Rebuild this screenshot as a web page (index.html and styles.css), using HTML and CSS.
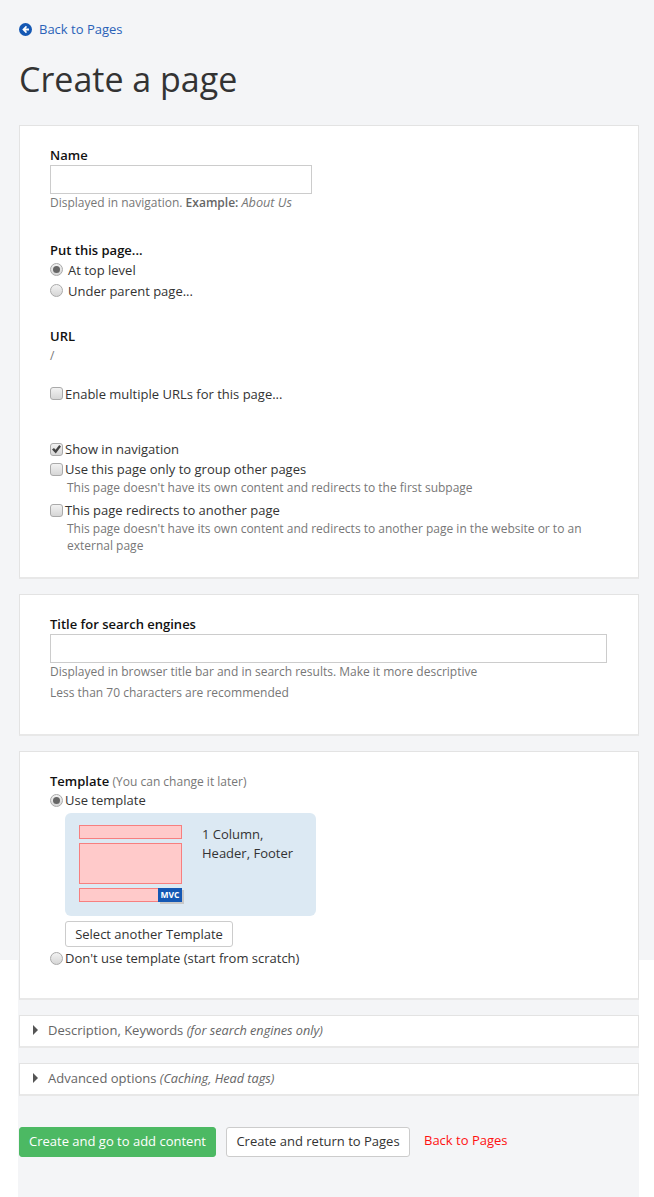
FILE: index.html
```html
<!DOCTYPE html>
<html lang="en">
<head>
    <meta charset="UTF-8"/>
    <title>Create a page</title>
    <link rel="stylesheet" href="styles.css">
</head>
<body>
<div class="page">
    <a class="back-link" href="#">
        <svg class="back-link_icon" viewBox="0 0 12 12" width="13" height="13">
            <circle cx="6" cy="6" r="6" fill="#1458b4"/>
            <path d="M6.4 2.6 3 6l3.4 3.4 1-1L6 7h3.2V5H6l1.4-1.4z" fill="#fff"/>
        </svg>
        Back to Pages
    </a>
    <h1 class="title">Create a page</h1>

    <!--main settings-->
    <div class="card card__main">
        <div class="field field__name">
            <label class="field_label" for="name">Name</label>
            <input class="text-input text-input__name" id="name" type="text">
            <p class="hint hint__name">Displayed in navigation. <b>Example:</b> <i>About Us</i></p>
        </div>

        <div class="field field__parent">
            <div class="field_label">Put this page...</div>
            <label class="option option__radio"><input type="radio" name="parent" checked>At top level</label>
            <label class="option option__radio"><input type="radio" name="parent">Under parent page...</label>
        </div>

        <div class="field field__url">
            <div class="field_label">URL</div>
            <p class="hint">/</p>
        </div>

        <label class="option option__multi"><input type="checkbox">Enable multiple URLs for this page...</label>

        <div class="field field__flags">
            <label class="option"><input type="checkbox" checked>Show in navigation</label>
            <label class="option"><input type="checkbox">Use this page only to group other pages</label>
            <p class="hint hint__option">This page doesn't have its own content and redirects to the first subpage</p>
            <label class="option option__spaced"><input type="checkbox">This page redirects to another page</label>
            <p class="hint hint__option">This page doesn't have its own content and redirects to another page in the website or to an external page</p>
        </div>
    </div>

    <!--search engines-->
    <div class="card card__seo">
        <label class="field_label" for="seoTitle">Title for search engines</label>
        <input class="text-input text-input__seo" id="seoTitle" type="text">
        <p class="hint">Displayed in browser title bar and in search results. Make it more descriptive</p>
        <p class="hint hint__second">Less than 70 characters are recommended</p>
    </div>

    <!--template-->
    <div class="card card__template">
        <div class="field_label field_label__template">Template <span class="field_note">(You can change it later)</span></div>
        <label class="option"><input type="radio" name="template" checked>Use template</label>
        <div class="template">
            <div class="template_preview">
                <div class="template_block template_block__head"></div>
                <div class="template_block template_block__body"></div>
                <div class="template_block template_block__foot"></div>
                <span class="template_badge">MVC</span>
            </div>
            <div class="template_name">1 Column,<br>Header, Footer</div>
        </div>
        <button class="btn btn__template" type="button">Select another Template</button>
        <label class="option"><input type="radio" name="template">Don't use template (start from scratch)</label>
    </div>

    <div class="fold"><span class="fold_arrow"></span>Description, Keywords&nbsp;<i>(for search engines only)</i></div>
    <div class="fold"><span class="fold_arrow"></span>Advanced options&nbsp;<i>(Caching, Head tags)</i></div>

    <div class="actions">
        <button class="btn btn__primary" type="button">Create and go to add content</button>
        <button class="btn btn__return" type="button">Create and return to Pages</button>
        <a class="cancel" href="#">Back to Pages</a>
    </div>
</div>
</body>
</html>
```

FILE: styles.css
```css
html, body {
    margin: 0;
}

body {
    font-family: "Open Sans", sans-serif;
    font-size: 13px;
    line-height: 20px;
    color: #333;
    background: #fff linear-gradient(#f4f5f7, #f4f5f7) no-repeat 0 0 / 100% 960px;
}

p {
    margin: 0;
}

.page {
    box-sizing: border-box;
    width: 621px;
    height: 1197px;
    margin-left: 18px;
    padding-top: 19px;
    background: #f4f5f7;
    overflow: hidden;
}

.back-link {
    display: flex;
    align-items: center;
    gap: 7px;
    margin-left: 1px;
    color: #2a62b8;
    text-decoration: none;
}

.title {
    margin: 14px 0 20px 1px;
    font-size: 34px;
    line-height: 52px;
    font-weight: 400;
    color: #333;
}

.card {
    box-sizing: border-box;
    margin: 0 0 15px 1px;
    padding: 19px 30px 0;
    background: #fff;
    border: 1px solid #e3e3e3;
    border-bottom: 2px solid #e8e8e8;
}

.card__main {
    height: 454px;
}

.card__seo {
    height: 142px;
}

.card__template {
    height: 249px;
}

.field_label {
    display: block;
    font-weight: 600;
    color: #111;
}

.field_label__template {
    margin-bottom: -2px;
}

.field_note {
    font-size: 12px;
    font-weight: 400;
    color: #777;
}

.text-input {
    display: block;
    box-sizing: border-box;
    height: 29px;
    padding: 0 6px;
    background: #fff;
    border: 1px solid #ccc;
}

.text-input__name {
    width: 262px;
}

.text-input__seo {
    width: 557px;
}

.hint {
    font-size: 12px;
    line-height: 18px;
    color: #777;
}

.hint b {
    font-weight: 600;
    color: #666;
}

.hint i {
    font-size: 12.7px;
}

.hint__name {
    margin-top: -1px;
}

.hint__second {
    margin-top: 3px;
}

.hint__option {
    margin-left: 17px;
    padding-right: 8px;
    line-height: 17px;
}

.field__parent {
    margin-top: 28px;
}

.field__parent .field_label {
    margin-bottom: -1px;
}

.field__url {
    margin-top: 25px;
}

.field__url .hint {
    margin-top: 1px;
}

.option {
    display: flex;
    align-items: center;
    height: 20px;
    color: #333;
}

.option input {
    flex: none;
    position: relative;
    box-sizing: border-box;
    width: 13px;
    height: 13px;
    margin: 0 2px 0 0;
    appearance: none;
    background: linear-gradient(#f2f2f2, #d6d6d6);
    border: 1px solid #aaa;
    border-radius: 3px;
}

.option input[type="radio"] {
    border-radius: 50%;
}

.option input[type="radio"]:checked::before {
    content: "";
    position: absolute;
    inset: 2px;
    background: #666;
    border-radius: 50%;
}

.option input[type="checkbox"]:checked::before {
    content: "";
    position: absolute;
    inset: 1px;
    background: #444;
    clip-path: polygon(0 55%, 22% 38%, 40% 58%, 80% 5%, 100% 22%, 42% 100%);
}

.option__radio {
    height: 21px;
}

.option__radio input {
    margin-right: 5px;
}

.option__multi {
    height: 21px;
    margin-top: 18px;
}

.field__flags {
    margin-top: 35px;
}

.option__spaced {
    margin-top: 4px;
}

.template {
    display: flex;
    gap: 20px;
    box-sizing: border-box;
    width: 251px;
    height: 103px;
    margin: 3px 0 5px 15px;
    padding: 12px 14px;
    background: #dce9f3;
    border-radius: 6px;
}

.template_preview {
    position: relative;
    flex: none;
    display: flex;
    flex-direction: column;
    gap: 4px;
    width: 103px;
}

.template_block {
    box-sizing: border-box;
    background: #ffcaca;
    border: 1px solid #f77f7f;
}

.template_block__head, .template_block__foot {
    height: 14px;
}

.template_block__body {
    height: 41px;
}

.template_badge {
    position: absolute;
    right: 0;
    top: 63px;
    width: 24px;
    height: 14px;
    font-size: 8.5px;
    line-height: 14px;
    font-weight: 700;
    text-align: center;
    color: #fff;
    background: #1458b4;
    box-shadow: 2px 2px 0 #c8c8c8;
}

.template_name {
    line-height: 19px;
    color: #333;
}

.btn {
    box-sizing: border-box;
    font-family: inherit;
    font-size: 13px;
    color: #333;
    background: #fff;
    border: 1px solid #ccc;
    border-radius: 3px;
    padding: 0;
}

.btn__template {
    display: block;
    width: 168px;
    height: 26px;
    margin: 0 0 1px 15px;
}

.fold {
    display: flex;
    align-items: center;
    box-sizing: border-box;
    height: 33px;
    margin: 0 0 15px 1px;
    padding: 0 0 2px 13px;
    color: #666;
    background: #fff;
    border: 1px solid #e3e3e3;
    border-bottom: 2px solid #e8e8e8;
}

.fold i {
    font-size: 12.7px;
    color: #666;
}

.fold_arrow {
    width: 0;
    height: 0;
    margin-right: 10px;
    border-style: solid;
    border-width: 5px 0 5px 5px;
    border-color: transparent transparent transparent #555;
}

.actions {
    display: flex;
    align-items: center;
    margin: 31px 0 0 1px;
}

.btn__primary {
    width: 197px;
    height: 30px;
    padding-bottom: 2px;
    color: #fff;
    background: #4cb963;
    border-color: #4cb963;
}

.btn__return {
    width: 184px;
    height: 30px;
    margin-left: 10px;
    padding-bottom: 2px;
}

.cancel {
    margin: -4px 0 0 14px;
    color: #f11;
    text-decoration: none;
}
```
